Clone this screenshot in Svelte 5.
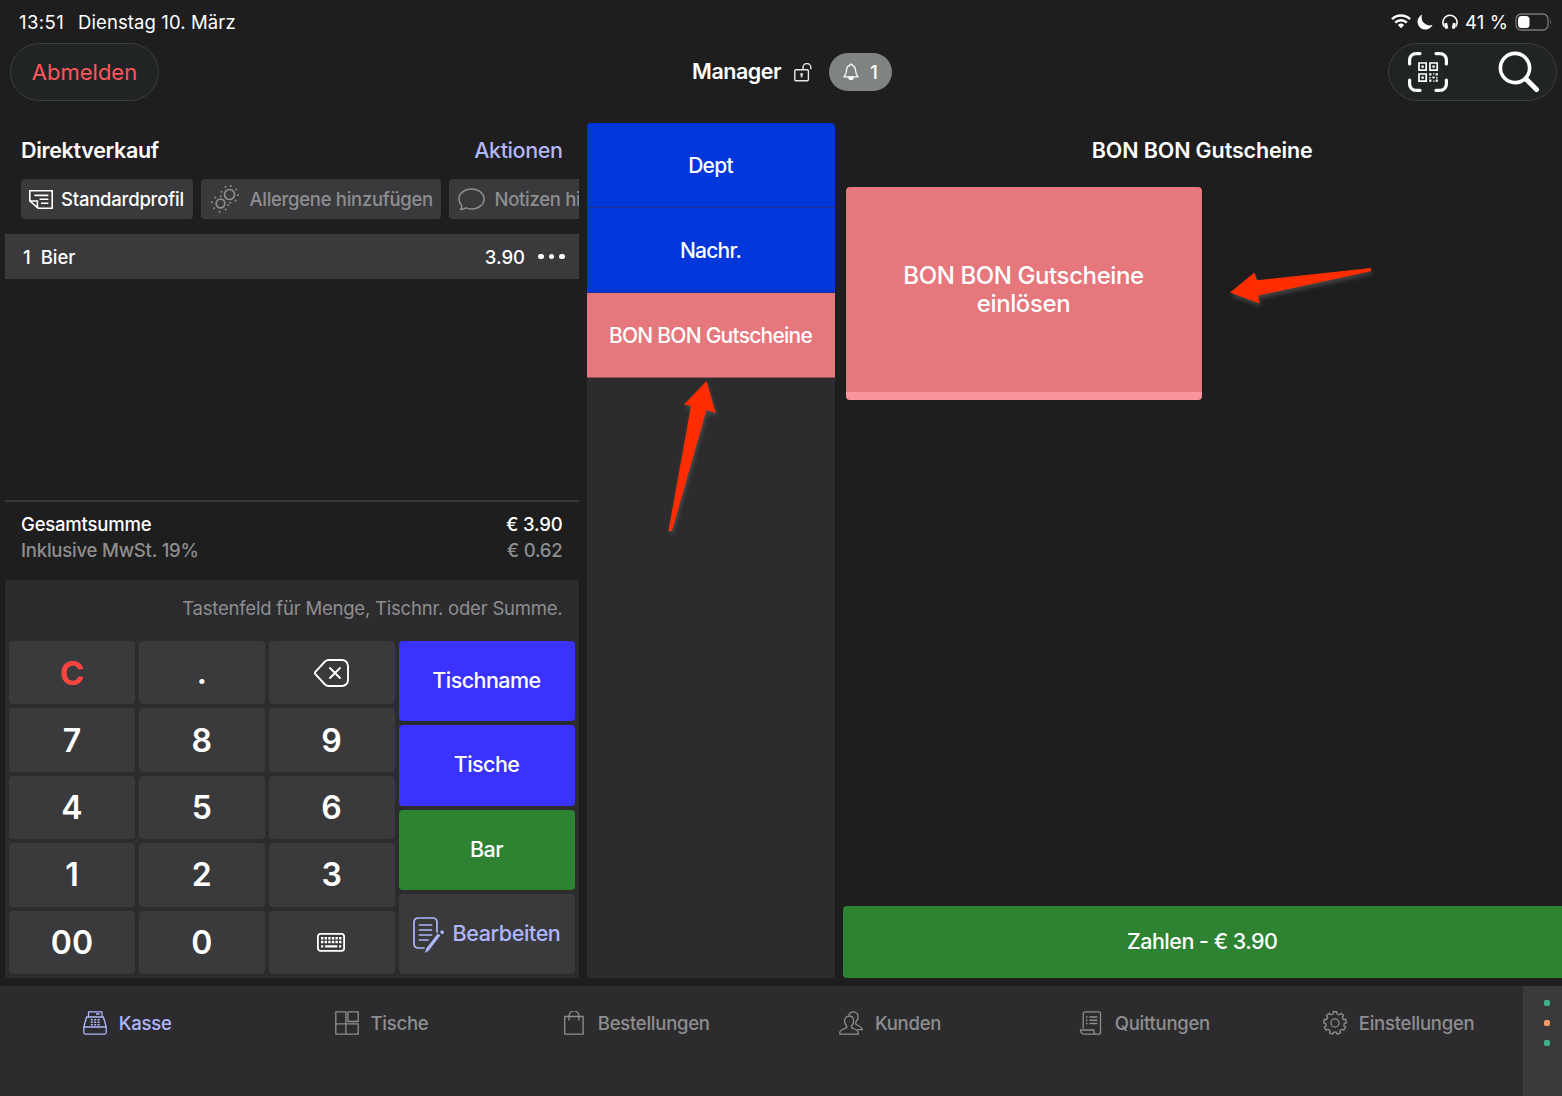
<script lang="ts">
	type Key = { label: string; kind?: string };

	const keys: Array<Key> = [
		{ label: 'C', kind: 'clear' },
		{ label: '.', kind: 'dot' },
		{ label: '', kind: 'backspace' },
		{ label: '7' },
		{ label: '8' },
		{ label: '9' },
		{ label: '4' },
		{ label: '5' },
		{ label: '6' },
		{ label: '1' },
		{ label: '2' },
		{ label: '3' },
		{ label: '00' },
		{ label: '0' },
		{ label: '', kind: 'keyboard' }
	];

	const categories = [
		{ name: 'Dept', color: 'blue' },
		{ name: 'Nachr.', color: 'blue' },
		{ name: 'BON BON Gutscheine', color: 'pink' }
	];

	const tabs = ['Kasse', 'Tische', 'Bestellungen', 'Kunden', 'Quittungen', 'Einstellungen'];
	let activeTab = $state('Kasse');

	// outline of the settings gear, nine teeth
	const teeth = 9;
	const gear = Array.from({ length: teeth }, (_, i) => {
		const step = (Math.PI * 2) / teeth;
		const at = (r: number, o: number) => {
			const a = i * step + o * step - Math.PI / 2;
			return `${(12 + r * Math.cos(a)).toFixed(2)} ${(12 + r * Math.sin(a)).toFixed(2)}`;
		};
		return `${at(9.2, -0.3)} L${at(11.4, -0.23)} L${at(11.4, 0.23)} L${at(9.2, 0.3)}`;
	}).join(' L');
</script>

<div class="screen">
	<div class="status">
		<span class="time">13:51</span>
		<span class="date">Dienstag 10. März</span>
		<div class="status-right">
			<svg width="20" height="15" viewBox="0 0 20 15" fill="none" stroke="#fff" stroke-width="2.5">
				<path d="M1 5.2a13 13 0 0 1 18 0M4.2 8.6a8.4 8.4 0 0 1 11.6 0" />
				<path d="M6.9 11a4.6 4.6 0 0 1 6.2 0L10 14.2z" fill="#fff" stroke="none" />
			</svg>
			<svg class="moon" width="16" height="16" viewBox="0 0 16 16">
				<path d="M5.200.6a7.800 7.800 0 1 0 10.300 10.200A7.900 7.900 0 0 1 5.200.6z" fill="#fff" />
			</svg>
			<svg class="phones" width="16" height="16" viewBox="0 0 16 16" fill="none" stroke="#fff" stroke-width="1.6">
				<path d="M2.6 13A7.1 7.1 0 1 1 13.4 13" />
				<path d="M3.6 9.2l1.2 5.4M12.4 9.2l-1.2 5.4" stroke-width="3" />
			</svg>
			<span class="percent">41 %</span>
			<svg width="37" height="18" viewBox="0 0 37 18">
				<rect x="1" y="1" width="32" height="16" rx="5" fill="none" stroke="#77787a" stroke-width="1.3" />
				<rect x="3" y="3" width="11.5" height="12" rx="3.5" fill="#fff" />
				<path d="M35 6.3q1.8 2.7 0 5.4z" fill="#77787a" />
			</svg>
		</div>
	</div>

	<header>
		<button class="glass logout">Abmelden</button>
		<div class="user">
			<span class="user-name">Manager</span>
			<svg width="18" height="19" viewBox="0 0 18 19" fill="none" stroke="#e8e8e8" stroke-width="1.4">
				<rect x=".8" y="6.8" width="13.6" height="11" rx="1.2" />
				<path d="M9 6.6V4.4a3.8 3.8 0 0 1 7.8 0v1.8" />
				<path d="M7.6 14.4v-2" stroke-width="1.6" />
				<circle cx="7.6" cy="11.4" r="1.1" fill="#e8e8e8" stroke-width=".6" />
			</svg>
			<div class="badge">
				<svg width="16" height="18" viewBox="0 0 16 18" fill="none" stroke="#fff" stroke-width="1.3" stroke-linejoin="round">
					<path d="M8 1.2c-.8 0-1.2.5-1.2 1.1C4.5 3 3.6 5 3.5 7.3 3.4 10.5 2.5 12.2.9 13.9h14.2c-1.6-1.7-2.5-3.4-2.6-6.6C12.4 5 11.5 3 9.2 2.300c0-.6-.4-1.1-1.2-1.1z" />
					<path d="M6 14.5a2 2 0 0 0 4 0z" fill="#fff" />
				</svg>
				<span>1</span>
			</div>
		</div>
		<div class="glass tools">
			<svg width="40" height="40" viewBox="0 0 40 40" fill="none" stroke="#fff">
				<path d="M1.6 12V8A6.4 6.4 0 0 1 8 1.6h4M28 1.6h4A6.4 6.4 0 0 1 38.4 8v4M38.4 28v4A6.4 6.4 0 0 1 32 38.4h-4M12 38.4H8A6.4 6.4 0 0 1 1.6 32v-4" stroke-width="3.2" stroke-linecap="round" />
				<path d="M11 11h7.2v7.2H11zM22 11h7.2v7.2H22zM11 22h7.2v7.2H11z" stroke-width="1.7" />
				<path d="M13.4 13.4h2.4v2.4h-2.4zM24.4 13.4h2.4v2.4h-2.4zM13.4 24.4h2.4v2.4h-2.4z" fill="#fff" stroke="none" />
				<path d="M21.2 21.2h2.2v2.2h-2.2zM27.600 21.2h2.2v2.2h-2.2zM24.400 24.400h2.2v2.2h-2.2zM21.2 27.600h2.2v2.2h-2.2zM27.600 27.600h2.2v2.2h-2.2zM25 21.200h1.400v1.400h-1.400zM21.200 25h1.400v1.400h-1.400zM28.200 25h1.400v1.400h-1.400zM25 28.400h1.400v1.400h-1.400z" fill="#fff" stroke="none" />
			</svg>
			<svg width="42" height="42" viewBox="0 0 42 42" fill="none" stroke="#fff">
				<circle cx="17" cy="17" r="14.600" stroke-width="3.6" />
				<path d="M28 28l10.500 10.500" stroke-width="5" stroke-linecap="round" />
			</svg>
		</div>
	</header>

	<main>
		<section class="order">
			<div class="order-head">
				<h2>Direktverkauf</h2>
				<span class="actions">Aktionen</span>
			</div>

			<div class="chips">
				<div class="chip profile">
					<svg width="24" height="19" viewBox="0 0 24 19" fill="none" stroke="#fff" stroke-width="1.6">
						<path d="M.8.8h22.4v17.4H9.2L.8 11z" />
						<path d="M.8 11h7.6v7M5.4 5.4h14M10.5 9.3h8.9M12 13.3h7.4" />
					</svg>
					<span>Standardprofil</span>
				</div>
				<div class="chip allergens muted">
					<svg width="28" height="28" viewBox="0 0 28 28" fill="none" stroke="#8e8e90" stroke-width="1.7">
						<circle cx="18.5" cy="9.5" r="5" />
						<circle cx="9.5" cy="18.5" r="4.3" />
						<g stroke-width="2" stroke-linecap="round">
							<path d="M19.8 1h.01M14.5 2h.01M25.2 4.4h.01M27 10h.01M24.6 15.4h.01M19.3 17.8h.01M10.6 6.8h.01M9.7 11.2h.01M4.4 12.5h.01M1 17.2h.01M3.2 23.2h.01M8.6 26.8h.01M14.6 24.6h.01M17.2 20h.01" />
						</g>
					</svg>
					<span>Allergene hinzufügen</span>
				</div>
				<div class="chip notes muted">
					<svg width="27" height="23" viewBox="0 0 27 23" fill="none" stroke="#8e8e90" stroke-width="1.5" stroke-linejoin="round">
						<path d="M3.6 17.4C1.8 15.6.9 13.3.9 11 .9 5.3 6.5.9 13.5.9S26.1 5.3 26.1 11 20.5 21 13.5 21c-2 0-3.9-.4-5.6-1.1-1.400 1-3.400 1.600-5.300 1.500 1-1 1.400-2.400 1-4z" />
					</svg>
					<span>Notizen hinzufügen</span>
				</div>
			</div>

			<div class="line">
				<span class="qty">1</span>
				<span class="item">Bier</span>
				<span class="price">3.90</span>
				<span class="dots"><i></i><i></i><i></i></span>
			</div>

			<div class="totals">
				<div class="total"><span>Gesamtsumme</span><span>€ 3.90</span></div>
				<div class="total tax"><span>Inklusive MwSt. 19%</span><span>€ 0.62</span></div>
			</div>

			<div class="keypad">
				<div class="hint">Tastenfeld für Menge, Tischnr. oder Summe.</div>
				<div class="pad">
					<div class="keys">
						{#each keys as k}
							<button class="key {k.kind ?? ''}">
								{#if k.kind == 'backspace'}
									<svg width="35" height="28" viewBox="0 0 35 28" fill="none" stroke="#fff" stroke-width="1.9" stroke-linecap="round" stroke-linejoin="round">
										<path d="M14.5 1h13.5a6 6 0 0 1 6 6v14a6 6 0 0 1-6 6H14.5a5 5 0 0 1-3.5-1.5L1.6 15.4a2 2 0 0 1 0-2.8L11 2.5A5 5 0 0 1 14.5 1z" />
										<path d="M16 9l10 10M26 9L16 19" />
									</svg>
								{:else if k.kind == 'keyboard'}
									<svg width="28" height="19" viewBox="0 0 28 19" fill="none" stroke="#fff" stroke-width="1.8">
										<rect x=".9" y=".9" width="26.2" height="17" rx="2.6" />
										<path d="M4 5.3h20.5M4 9h20.5" stroke-width="2.4" stroke-dasharray="2.4 1.220" />
										<path d="M4 13.3h2.2M8 13.3h12.3M22 13.3h2.2" stroke-width="2.2" />
									</svg>
								{:else}
									{k.label}
								{/if}
							</button>
						{/each}
					</div>
					<div class="side">
						<button class="act violet">Tischname</button>
						<button class="act violet">Tische</button>
						<button class="act green">Bar</button>
						<button class="act edit">
							<svg width="31" height="37" viewBox="0 0 31 37" fill="none" stroke="#afb6fb" stroke-width="1.7" stroke-linecap="round">
								<path d="M11 31H5a4 4 0 0 1-4-4V5a4 4 0 0 1 4-4h15a4 4 0 0 1 4 4v10" />
								<path d="M6.5 8h12M6.5 13h12M6.5 18h12M6.5 23h8.5" />
								<path d="M24.8 16.5l2.5 2.1-11.5 15-4 2.3 1.6-4.6z" fill="#afb6fb" stroke="none" />
								<path d="M29 15l.3.3" stroke-width="3.2" />
							</svg>
							<span>Bearbeiten</span>
						</button>
					</div>
				</div>
			</div>
		</section>

		<section class="categories">
			{#each categories as c}
				<button class="category {c.color}">{c.name}</button>
			{/each}
		</section>

		<section class="products">
			<h2>BON BON Gutscheine</h2>
			<button class="product">BON BON Gutscheine<br />einlösen</button>
			<button class="pay">Zahlen - € 3.90</button>
		</section>
	</main>

	<nav>
		<div class="tabs">
			{#each tabs as tab}
				<button class="tab" class:active={tab == activeTab} onclick={() => (activeTab = tab)}>
					<svg width="24" height="24" viewBox="0 0 24 24" fill="none" stroke="currentColor" stroke-width="1.3" stroke-linejoin="round">
						{#if tab == 'Kasse'}
							<path d="M5.5 6V.8h13.5V6M3.6 6h16.8L23.2 16v5.6a1.5 1.5 0 0 1-1.5 1.5H2.3A1.5 1.5 0 0 1 .8 21.6V16zM.8 16h22.4M13 3h3.5" />
							<path d="M7.8 8.7h2M11.2 8.7h2M14.6 8.7h2M7.8 11.3h2M11.2 11.3h2M14.6 11.3h2M7.8 13.8h2M11.2 13.8h2M14.6 13.8h2" stroke-width="1.5" />
						{:else if tab == 'Tische'}
							<path d="M.8.8h10.1v12.1H.8zM12.9.8h10.3v9.7H12.9zM.8 12.9h10.1v10.3H.8zM10.9 12.9h12.3v10.3H10.9z" />
						{:else if tab == 'Bestellungen'}
							<path d="M2.7 5.500h18.4v17.700H2.7zM7 9.500V4.9a4.9 5 0 0 1 9.9 0V9.500" />
						{:else if tab == 'Kunden'}
							<path d="M.8 23.2h18.4v-1.7c0-2.6-4.5-3.5-6.6-4.9v-1.9c1.3-1 2-2.7 2-4.7 0-3-1.9-5-4.4-5S5.6 7 5.6 10c0 2 .8 3.7 2 4.7v1.9C5.4 18 .8 19 .8 21.5z" />
							<path d="M9.8 4.4C10.3 2.2 12 .8 14.3.8c2.8 0 4.8 2.1 4.8 5 0 2.5-1 4.2-2.3 5.2v2.2c1.8 1.3 6.5 2.5 6.5 5.5h-5" />
						{:else if tab == 'Quittungen'}
							<path d="M4.2 17.6V2.8a2 2 0 0 1 2-2h13.3a2 2 0 0 1 2 2v18.4a2 2 0 0 1-2 2H5c-2.2 0-3.6-1.9-3.6-4.2h13.4c0 2.3.5 4.2 2.3 4.2" />
							<path d="M10.3 6h8M10.3 9.2h8M10.3 12.4h8M6.9 6h1.6M6.9 9.2h1.6M6.9 12.4h1.6" stroke-width="1.5" />
						{:else}
							<path d="M{gear}z" />
							<circle cx="12" cy="12" r="4.1" />
						{/if}
					</svg>
					<span>{tab}</span>
				</button>
			{/each}
		</div>
		<div class="leds"><i></i><i class="orange"></i><i></i></div>
	</nav>

	<svg class="arrow up" width="60" height="160" viewBox="0 0 60 160">
		<path d="M46.5 1L55.8 33 46.5 30 12 151H8.500L31 26l-7-1.500z" fill="#ff2d00" />
	</svg>
	<svg class="arrow left" width="152" height="44" viewBox="0 0 152 44">
		<path d="M0 24.5L24.5 4.5l2.500 7.800L141 0v3.2L28.2 27.5l1.300 8z" fill="#ff2d00" />
	</svg>
</div>

<style>
	:global(body) {
		background: #1e1e1f;
	}
	.screen {
		position: relative;
		width: 1562px;
		height: 1096px;
		overflow: hidden;
		display: flex;
		flex-direction: column;
		background: #1e1e1f;
		color: #fff;
		font-family: Inter, "Liberation Sans", sans-serif;
		font-size: 18.5px;
	}
	button {
		border: none;
		margin: 0;
		padding: 0;
		background: none;
		color: inherit;
		font: inherit;
	}
	h2 {
		margin: 0;
		font-size: 21.5px;
		font-weight: 600;
	}
	svg {
		flex: none;
		display: block;
	}

	.status {
		height: 43px;
		box-sizing: border-box;
		padding: 0 10px 0 19px;
		display: flex;
		align-items: center;
		gap: 14px;
		font-size: 18.5px;
		letter-spacing: 0.1px;
	}
	.time {
		letter-spacing: 0.4px;
	}
	.status-right {
		margin-left: auto;
		display: flex;
		align-items: center;
	}
	.moon {
		margin-left: 6px;
	}
	.phones {
		margin: 0 7px 0 9px;
	}
	.percent {
		margin-right: 7px;
	}

	header {
		height: 58px;
		flex: none;
		padding: 0 5px 0 10px;
		display: flex;
		justify-content: space-between;
	}
	.glass {
		height: 58px;
		box-sizing: border-box;
		border: 1px solid #3b3d3f;
		border-radius: 29px;
		background: #212425;
	}
	.logout {
		width: 149px;
		color: #ff565c;
		font-size: 22px;
	}
	.user {
		display: flex;
		align-items: center;
		margin-left: 37px;
	}
	.user-name {
		font-size: 21.5px;
		font-weight: 600;
		letter-spacing: -0.5px;
		margin-right: 13px;
		padding-bottom: 2px;
	}
	.badge {
		width: 63px;
		height: 38px;
		margin-left: 17px;
		border-radius: 19px;
		background: #7f8481;
		display: flex;
		align-items: center;
		justify-content: center;
		gap: 11px;
		font-size: 19px;
		font-weight: 500;
	}
	.tools {
		width: 169px;
		padding: 0 16px 0 19px;
		display: flex;
		align-items: center;
		justify-content: space-between;
	}

	main {
		height: 855px;
		flex: none;
		margin-top: 22px;
		padding-left: 5px;
		display: flex;
	}
	.order {
		width: 573.5px;
		display: flex;
		flex-direction: column;
	}
	.order-head {
		height: 56px;
		box-sizing: border-box;
		padding: 0 16px 2px;
		display: flex;
		align-items: center;
		justify-content: space-between;
		letter-spacing: -0.33px;
	}
	.actions {
		color: #afb6fb;
		font-size: 21.5px;
		font-weight: 500;
		letter-spacing: -0.4px;
	}
	.chips {
		padding-left: 16px;
		display: flex;
		gap: 8px;
		overflow: hidden;
	}
	.chip {
		height: 40px;
		flex: none;
		box-sizing: border-box;
		border-radius: 4px;
		background: #3a3a3c;
		display: flex;
		align-items: center;
		font-weight: 500;
		letter-spacing: -0.3px;
		white-space: nowrap;
	}
	.profile {
		width: 171.5px;
		padding-left: 8px;
		gap: 8px;
		letter-spacing: -0.22px;
	}
	.allergens {
		width: 240px;
		padding-left: 10px;
		gap: 11px;
	}
	.notes {
		width: 226px;
		padding-left: 9px;
		gap: 10px;
	}
	.muted {
		color: #8e8e90;
	}
	.line {
		height: 45px;
		flex: none;
		margin-top: 15px;
		box-sizing: border-box;
		padding: 0 14px 0 18px;
		background: #3a3a3c;
		display: flex;
		align-items: center;
		font-weight: 500;
	}
	.item {
		margin-left: 10px;
	}
	.price {
		margin-left: auto;
	}
	.dots {
		display: flex;
		gap: 5px;
		margin-left: 13px;
	}
	.dots i {
		width: 5.5px;
		height: 5.5px;
		border-radius: 50%;
		background: #fff;
	}
	.totals {
		margin-top: auto;
		height: 80px;
		flex: none;
		box-sizing: border-box;
		border-top: 2px solid #38383a;
		padding: 10px 16px 0;
		letter-spacing: -0.2px;
	}
	.total {
		display: flex;
		justify-content: space-between;
		line-height: 25.5px;
		font-weight: 500;
	}
	.tax {
		color: #8e8e90;
	}

	.keypad {
		height: 398px;
		flex: none;
		box-sizing: border-box;
		padding: 0 4px 4px;
		border-radius: 4px;
		background: #2c2c2e;
		display: flex;
		flex-direction: column;
	}
	.hint {
		height: 61px;
		line-height: 57px;
		flex: none;
		padding-right: 12px;
		text-align: right;
		color: #8e8e90;
		letter-spacing: -0.21px;
	}
	.pad {
		flex: 1;
		display: flex;
		gap: 4px;
	}
	.keys {
		width: 385.5px;
		display: grid;
		grid-template-columns: repeat(3, 1fr);
		grid-template-rows: repeat(5, 1fr);
		gap: 4px;
	}
	.key {
		border-radius: 4px;
		background: #3a3a3c;
		display: flex;
		align-items: center;
		justify-content: center;
		font-size: 32px;
		font-weight: 600;
	}
	.key svg {
		margin-right: 1px;
	}
	.clear {
		color: #ff453f;
		font-size: 33px;
		font-weight: 700;
	}
	.side {
		flex: 1;
		display: grid;
		grid-template-rows: repeat(4, 1fr);
		gap: 4px;
	}
	.act {
		padding-bottom: 2px;
		border-radius: 4px;
		font-size: 21.5px;
		font-weight: 500;
		letter-spacing: -0.55px;
		display: flex;
		align-items: center;
		justify-content: center;
	}
	.violet {
		background: #3a32ff;
	}
	.green {
		background: #2e8332;
	}
	.edit {
		background: #3a3a3c;
		color: #afb6fb;
		gap: 9px;
		letter-spacing: -0.4px;
	}
	.edit svg {
		margin-top: 6px;
	}

	.categories {
		width: 248px;
		margin: 0 8px;
		border-radius: 4px;
		background: #2c2c2e;
		overflow: hidden;
		display: flex;
		flex-direction: column;
	}
	.category {
		height: 85px;
		flex: none;
		box-sizing: border-box;
		border-bottom: 1px solid #1d3290;
		font-size: 21px;
		font-weight: 500;
		letter-spacing: -0.75px;
	}
	.blue {
		background: #0037da;
	}
	.pink {
		background: #e5777d;
		border-color: #8a5558;
	}

	.products {
		flex: 1;
		display: flex;
		flex-direction: column;
	}
	.products h2 {
		height: 64px;
		line-height: 54px;
		text-align: center;
		letter-spacing: -0.13px;
	}
	.product {
		width: 356px;
		height: 213px;
		margin-left: 3px;
		border-radius: 4px;
		border-bottom: 8px solid #fb959c;
		background: #e5777d;
		font-size: 24px;
		font-weight: 500;
		line-height: 28px;
		letter-spacing: -0.4px;
	}
	.pay {
		height: 72px;
		margin-top: auto;
		padding-bottom: 2px;
		border-radius: 4px 0 0 4px;
		background: #2e8332;
		font-size: 21.5px;
		font-weight: 500;
		letter-spacing: -0.52px;
	}

	nav {
		height: 110px;
		margin-top: 8px;
		flex: none;
		background: #2c2c2e;
		display: flex;
	}
	.tabs {
		width: 1523px;
		display: grid;
		grid-template-columns: repeat(6, 254.3px);
	}
	.tab {
		height: 74px;
		display: flex;
		align-items: center;
		justify-content: center;
		gap: 12px;
		color: #8e8e90;
		font-weight: 500;
		letter-spacing: -0.25px;
	}
	.active {
		color: #afb6fb;
	}
	.leds {
		width: 39px;
		box-sizing: border-box;
		padding: 14px 0 0 21px;
		background: #3a3a3c;
		display: flex;
		flex-direction: column;
		gap: 14px;
	}
	.leds i {
		width: 6px;
		height: 6px;
		border-radius: 2px;
		background: #43b08d;
	}
	.leds .orange {
		background: #f79b63;
	}

	/* pointers laid over the till */
	.arrow {
		position: absolute;
		filter: drop-shadow(1px 3px 2px rgba(110, 110, 110, 0.5));
	}
	.up {
		left: 660px;
		top: 380px;
	}
	.left {
		left: 1230px;
		top: 268px;
	}
</style>
